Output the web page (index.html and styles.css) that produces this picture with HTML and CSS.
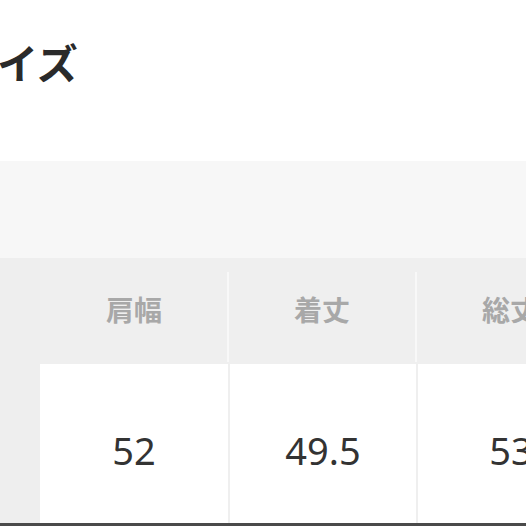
FILE: index.html
```html
<!DOCTYPE html>
<html lang="ja">
<head>
<meta charset="utf-8">
<link rel="stylesheet" href="styles.css">
</head>
<body>
<div class="page">
  <h2 class="title">サイズ</h2>
  <div class="band"></div>
  <div class="table">
    <div class="row head">
      <div class="side"></div>
      <div class="cell">肩幅</div>
      <div class="cell">着丈</div>
      <div class="cell">総丈</div>
    </div>
    <div class="row body">
      <div class="side"></div>
      <div class="cell">52</div>
      <div class="cell">49.5</div>
      <div class="cell">53</div>
    </div>
  </div>
  <div class="bottom"></div>
</div>
</body>
</html>
```
FILE: styles.css
```css
html, body {
  margin: 0;
  padding: 0;
  background: #fff;
  overflow: hidden;
}
.page {
  width: 526px;
  height: 526px;
  overflow: hidden;
  display: flex;
  flex-direction: column;
}
.title {
  margin: 0 0 0 -44px;
  height: 161px;
  padding-top: 40px;
  box-sizing: border-box;
  font-family: "Noto Sans CJK JP", sans-serif;
  font-weight: 700;
  font-size: 41px;
  line-height: 42px;
  color: #2a2a2a;
  white-space: nowrap;
}
.band {
  height: 97px;
  background: #f7f7f7;
  flex: none;
}
.table {
  display: flex;
  flex-direction: column;
  width: 700px;
}
.row {
  display: flex;
}
.side {
  width: 40px;
  flex: none;
  background: #eeeeee;
}
.cell {
  width: 188px;
  flex: none;
  display: flex;
  align-items: center;
  justify-content: center;
  box-sizing: border-box;
}
.head {
  height: 106px;
  background: #efefef;
}
.head .cell {
  font-family: "Noto Sans CJK JP", sans-serif;
  font-weight: 700;
  font-size: 28px;
  color: #a8a8a8;
  padding-bottom: 4px;
  position: relative;
}
.head .cell + .cell::before {
  content: "";
  position: absolute;
  left: -1px;
  top: 14px;
  bottom: 2px;
  width: 2px;
  background: #f8f8f8;
}
.body {
  height: 159px;
}
.body .cell {
  background: #fff;
  font-family: "Noto Sans", "Open Sans", sans-serif;
  font-size: 38px;
  color: #333;
  padding-top: 12px;
}
.body .cell + .cell {
  border-left: 2px solid #efefef;
}
.bottom {
  height: 3px;
  background: #4a4a4a;
  flex: none;
}
```
